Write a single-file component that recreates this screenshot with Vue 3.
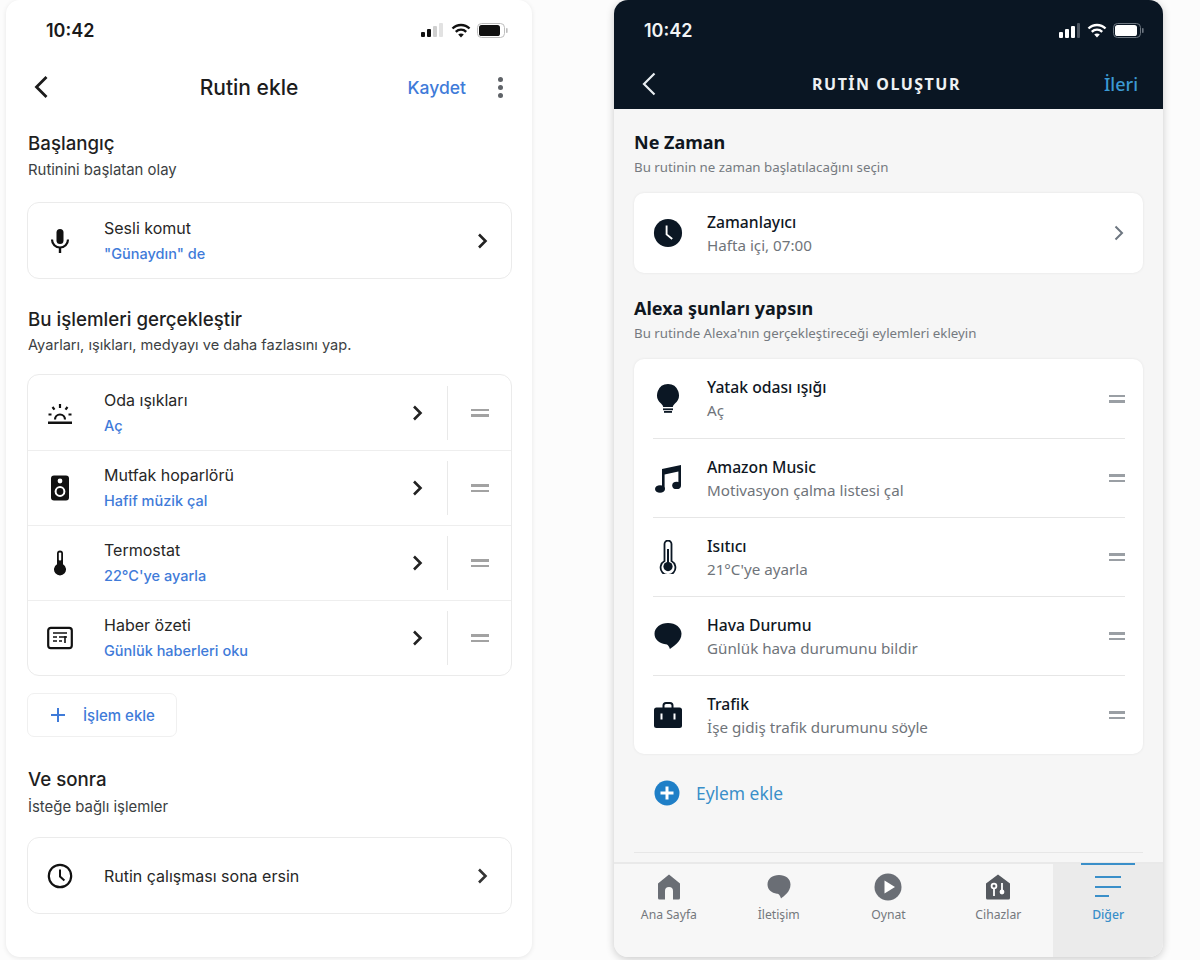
<template>
  <main class="page">
    <!-- Google Home style -->
    <section class="phone phone-light">
      <div class="status">
        <span class="time">10:42</span>
        <div class="status-icons">
          <svg width="24" height="14" viewBox="0 0 24 14">
            <rect x="0" y="9" width="4" height="5" rx="1" fill="#111" />
            <rect x="6" y="6" width="4" height="8" rx="1" fill="#111" />
            <rect x="12" y="3" width="4" height="11" rx="1" fill="#cfcfcf" />
            <rect x="18" y="0" width="4" height="14" rx="1" fill="#e2e2e2" />
          </svg>
          <svg width="20" height="15" viewBox="0 0 20 15" fill="none" stroke="#111" stroke-width="2.4">
            <path d="M1.5 5.5a12 12 0 0 1 17 0" />
            <path d="M4.8 8.8a7.4 7.4 0 0 1 10.4 0" />
            <path d="M10 14.6l-2.8-3a3.9 3.9 0 0 1 5.6 0z" fill="#111" stroke="none" />
          </svg>
          <svg width="31" height="15" viewBox="0 0 31 15">
            <rect x="0.5" y="0.5" width="27" height="14" rx="4" fill="none" stroke="#bdbdbd" />
            <rect x="2" y="2" width="21" height="11" rx="2.6" fill="#111" />
            <rect x="29" y="5" width="1.6" height="5" rx="0.8" fill="#bdbdbd" />
          </svg>
        </div>
      </div>

      <header class="nav">
        <svg class="back" width="16" height="24" viewBox="0 0 16 24" fill="none" stroke="#1b1b1b" stroke-width="2.8">
          <path d="M13.5 2L3.5 12l10 10" />
        </svg>
        <h1>Rutin ekle</h1>
        <span class="save">Kaydet</span>
        <div class="dots"><i></i><i></i><i></i></div>
      </header>

      <div class="section-head first">
        <h2>Başlangıç</h2>
        <p>Rutinini başlatan olay</p>
      </div>
      <div class="g-card">
        <div class="g-row">
          <span class="g-icon">
            <svg width="26" height="26" viewBox="0 0 26 26" fill="#111">
              <rect x="9.5" y="1" width="7" height="15" rx="3.5" />
              <path d="M5 11.5a8 8 0 0 0 16 0" fill="none" stroke="#111" stroke-width="2.2" />
              <rect x="11.8" y="19" width="2.4" height="6" />
            </svg>
          </span>
          <div class="g-text">
            <strong>Sesli komut</strong>
            <small>"Günaydın" de</small>
          </div>
          <svg class="g-chevron end" width="12" height="16" viewBox="0 0 12 16" fill="none" stroke="#222" stroke-width="2.6">
            <path d="M2 1.5L8.5 8 2 14.5" />
          </svg>
        </div>
      </div>

      <div class="section-head second">
        <h2>Bu işlemleri gerçekleştir</h2>
        <p>Ayarları, ışıkları, medyayı ve daha fazlasını yap.</p>
      </div>
      <div class="g-card">
        <div v-for="row in googleRows" :key="row.title" class="g-row">
          <span class="g-icon">
            <svg v-if="row.icon === 'sun'" width="26" height="22" viewBox="0 0 26 22" fill="none" stroke="#111" stroke-width="2.2">
              <path d="M8 17.5a5 5 0 0 1 10 0" />
              <path d="M1 20.8h24" stroke-width="2.6" />
              <path d="M13 2v4M5.5 5l2 2.6M20.5 5l-2 2.6M1.5 12.5h3M21.5 12.5h3" />
            </svg>
            <svg v-else-if="row.icon === 'speaker'" width="20" height="26" viewBox="0 0 20 26">
              <rect x="1" y="0.5" width="18" height="25" rx="3" fill="#111" />
              <circle cx="10" cy="6" r="2.4" fill="#fff" />
              <circle cx="10" cy="16.5" r="4.4" fill="none" stroke="#fff" stroke-width="2" />
            </svg>
            <svg v-else-if="row.icon === 'thermo'" width="14" height="26" viewBox="0 0 14 26" fill="#111">
              <path d="M4 3.5a3 3 0 0 1 6 0v10.8a6 6 0 1 1-6 0z" />
              <rect x="5.8" y="2.4" width="2.4" height="8" rx="1" fill="#fff" />
            </svg>
            <svg v-else width="26" height="24" viewBox="0 0 26 24" fill="none" stroke="#111">
              <rect x="1.2" y="1.8" width="23.6" height="20.4" rx="2.6" stroke-width="2.2" />
              <path d="M6 7h14M12 11h8M6 11h4M6 15h4M12 15h3M18 10v7" stroke-width="1.6" />
            </svg>
          </span>
          <div class="g-text">
            <strong>{{ row.title }}</strong>
            <small>{{ row.sub }}</small>
          </div>
          <svg class="g-chevron" width="12" height="16" viewBox="0 0 12 16" fill="none" stroke="#222" stroke-width="2.6">
            <path d="M2 1.5L8.5 8 2 14.5" />
          </svg>
          <span class="g-sep"></span>
          <span class="g-drag"><i></i><i></i></span>
        </div>
      </div>

      <button type="button" class="add-btn">
        <svg width="16" height="16" viewBox="0 0 16 16" stroke="#3f7bd9" stroke-width="2">
          <path d="M8 1v14M1 8h14" />
        </svg>
        <span>İşlem ekle</span>
      </button>

      <div class="section-head third">
        <h2>Ve sonra</h2>
        <p>İsteğe bağlı işlemler</p>
      </div>
      <div class="g-card">
        <div class="g-row">
          <span class="g-icon">
            <svg width="26" height="26" viewBox="0 0 26 26" fill="none" stroke="#111" stroke-width="2.2">
              <circle cx="13" cy="13" r="11.2" />
              <path d="M13 6.5V13.5l4.4 4" stroke-width="2" />
            </svg>
          </span>
          <div class="g-text"><strong>Rutin çalışması sona ersin</strong></div>
          <svg class="g-chevron end" width="12" height="16" viewBox="0 0 12 16" fill="none" stroke="#333" stroke-width="2.6">
            <path d="M2 1.5L8.5 8 2 14.5" />
          </svg>
        </div>
      </div>
    </section>

    <!-- Alexa style -->
    <section class="phone phone-alexa">
      <div class="alexa-top">
        <div class="status status-dark">
          <span class="time">10:42</span>
          <div class="status-icons">
            <svg width="22" height="15" viewBox="0 0 22 15">
              <rect x="0" y="9" width="4" height="6" rx="1" fill="#fff" />
              <rect x="6" y="6" width="4" height="9" rx="1" fill="#fff" />
              <rect x="12" y="3" width="4" height="12" rx="1" fill="#fff" />
              <rect x="18" y="0" width="3" height="15" rx="1" fill="#4c5560" />
            </svg>
            <svg width="20" height="15" viewBox="0 0 20 15" fill="none" stroke="#fff" stroke-width="2.4">
              <path d="M1.5 5.5a12 12 0 0 1 17 0" />
              <path d="M4.8 8.8a7.4 7.4 0 0 1 10.4 0" />
              <path d="M10 14.6l-2.8-3a3.9 3.9 0 0 1 5.6 0z" fill="#fff" stroke="none" />
            </svg>
            <svg width="31" height="15" viewBox="0 0 31 15">
              <rect x="0.5" y="0.5" width="27" height="14" rx="4" fill="none" stroke="#6d7680" />
              <rect x="2" y="2" width="22" height="11" rx="2.6" fill="#fff" />
              <rect x="29" y="5" width="1.6" height="5" rx="0.8" fill="#6d7680" />
            </svg>
          </div>
        </div>
        <header class="alexa-nav">
          <svg width="16" height="24" viewBox="0 0 16 24" fill="none" stroke="#e8edf1" stroke-width="2.2">
            <path d="M13.5 1.5L3 12l10.5 10.5" />
          </svg>
          <h1>RUTİN OLUŞTUR</h1>
          <span>İleri</span>
        </header>
      </div>

      <div class="alexa-body">
        <h2 class="a-head">Ne Zaman</h2>
        <p class="a-sub">Bu rutinin ne zaman başlatılacağını seçin</p>
        <div class="a-card">
          <div class="a-row timer">
            <span class="a-icon">
              <svg width="32" height="32" viewBox="0 0 32 32">
                <circle cx="16" cy="16" r="15" fill="#0b1724" />
                <path d="M14.5 8v9.5l6 5" fill="none" stroke="#fff" stroke-width="2" />
              </svg>
            </span>
            <div class="a-text">
              <strong>Zamanlayıcı</strong>
              <small>Hafta içi, 07:00</small>
            </div>
            <svg width="12" height="16" viewBox="0 0 12 16" fill="none" stroke="#6d7680" stroke-width="2">
              <path d="M2.5 1.5L9 8l-6.5 6.5" />
            </svg>
          </div>
        </div>

        <h2 class="a-head second">Alexa şunları yapsın</h2>
        <p class="a-sub">Bu rutinde Alexa'nın gerçekleştireceği eylemleri ekleyin</p>
        <div class="a-card">
          <div v-for="row in alexaRows" :key="row.title" class="a-row">
            <span class="a-icon">
              <svg v-if="row.icon === 'bulb'" width="24" height="32" viewBox="0 0 24 32" fill="#0b1724">
                <path d="M12 1a11 11 0 0 0-7 19.4c1.4 1.2 2 2.4 2.2 3.6h9.6c.2-1.2.8-2.4 2.2-3.6A11 11 0 0 0 12 1z" />
                <rect x="7" y="25.4" width="10" height="1.8" />
                <rect x="8" y="28" width="8" height="1.8" />
              </svg>
              <svg v-else-if="row.icon === 'music'" width="28" height="30" viewBox="0 0 28 30" fill="#0b1724">
                <path d="M8 6l19-4v20h-2.6V8.6L10.6 11.4V26H8z" />
                <ellipse cx="6" cy="26" rx="5" ry="3.8" />
                <ellipse cx="22.6" cy="22.4" rx="4.4" ry="3.6" />
              </svg>
              <svg v-else-if="row.icon === 'thermo'" width="18" height="34" viewBox="0 0 18 34" fill="none" stroke="#0b1724" stroke-width="1.8">
                <path d="M5.5 4a3.5 3.5 0 0 1 7 0v17a7.4 7.4 0 1 1-7 0z" />
                <circle cx="9" cy="26.6" r="4.6" fill="#0b1724" stroke="none" />
                <path d="M9 9v16" stroke-width="2" />
              </svg>
              <svg v-else-if="row.icon === 'bubble'" width="28" height="28" viewBox="0 0 28 28" fill="#0b1724">
                <path d="M14 1C6.5 1 .5 5.6.5 11.8c0 5.6 4.6 9.8 11 10.4 1.6.2 3.4 1 4.4 4.8 3-2.4 11.6-7 11.6-15.2C27.5 5.6 21.5 1 14 1z" />
              </svg>
              <svg v-else width="28" height="28" viewBox="0 0 28 28">
                <path d="M9.5 7V4.6A2.6 2.6 0 0 1 12 2h4a2.6 2.6 0 0 1 2.5 2.6V7" fill="none" stroke="#0b1724" stroke-width="2" />
                <rect x="0" y="6.5" width="28" height="20.5" rx="2.5" fill="#0b1724" />
                <path d="M7.5 12.5v6M20.5 12.5v6" stroke="#fff" stroke-width="2" />
              </svg>
            </span>
            <div class="a-text">
              <strong>{{ row.title }}</strong>
              <small>{{ row.sub }}</small>
            </div>
            <span class="a-drag"><i></i><i></i></span>
          </div>
        </div>

        <div class="a-add">
          <svg width="26" height="26" viewBox="0 0 26 26">
            <circle cx="13" cy="13" r="12.5" fill="#1f7fc7" />
            <path d="M13 6.5v13M6.5 13h13" stroke="#fff" stroke-width="3" />
          </svg>
          <span>Eylem ekle</span>
        </div>
        <div class="a-rule"></div>
      </div>

      <nav class="tabs">
        <div v-for="tab in tabs" :key="tab.label" class="tab" :class="{ active: tab.active }">
          <svg v-if="tab.icon === 'home'" width="24" height="26" viewBox="0 0 24 26" fill="#6a6e75">
            <path d="M12 .5L1 9.5V24a1.500 1.500 0 0 0 1.500 1.500H8V17a4 4 0 0 1 8 0v8.500h5.500A1.500 1.500 0 0 0 23 24V9.500z" />
          </svg>
          <svg v-else-if="tab.icon === 'chat'" width="24" height="26" viewBox="0 0 24 26" fill="#6a6e75">
            <path d="M12 1C5.500 1 .5 4.800.5 10.500c0 5 4 8.600 9.500 9.200 1.500.2 3 1 4 4.800 2.600-2.200 9.500-6.500 9.500-14C23.500 4.800 18.500 1 12 1z" />
          </svg>
          <svg v-else-if="tab.icon === 'play'" width="28" height="28" viewBox="0 0 28 28">
            <circle cx="14" cy="14" r="13.5" fill="#6a6e75" />
            <path d="M10.500 7.500L21 14l-10.500 6.500z" fill="#fff" />
          </svg>
          <svg v-else-if="tab.icon === 'devices'" width="26" height="26" viewBox="0 0 26 26">
            <path d="M13 .5L1 9.500V24a1.500 1.500 0 0 0 1.500 1.500h21A1.500 1.500 0 0 0 25 24V9.500z" fill="#55595f" />
            <circle cx="9" cy="12" r="2.4" fill="none" stroke="#fff" stroke-width="1.8" />
            <path d="M9 14.500V22" stroke="#fff" stroke-width="1.8" />
            <circle cx="17" cy="18" r="2.4" fill="#fff" />
            <path d="M17 9v7" stroke="#fff" stroke-width="1.8" />
          </svg>
          <svg v-else width="26" height="26" viewBox="0 0 26 26" stroke="#3a8fc9" stroke-width="2.2">
            <path d="M0 3h26M0 13h26M0 22h14" />
          </svg>
          <span>{{ tab.label }}</span>
        </div>
      </nav>
    </section>
  </main>
</template>

<script setup>
const googleRows = [
  { icon: 'sun', title: 'Oda ışıkları', sub: 'Aç' },
  { icon: 'speaker', title: 'Mutfak hoparlörü', sub: 'Hafif müzik çal' },
  { icon: 'thermo', title: 'Termostat', sub: "22°C'ye ayarla" },
  { icon: 'news', title: 'Haber özeti', sub: 'Günlük haberleri oku' }
]

const alexaRows = [
  { icon: 'bulb', title: 'Yatak odası ışığı', sub: 'Aç' },
  { icon: 'music', title: 'Amazon Music', sub: 'Motivasyon çalma listesi çal' },
  { icon: 'thermo', title: 'Isıtıcı', sub: "21°C'ye ayarla" },
  { icon: 'bubble', title: 'Hava Durumu', sub: 'Günlük hava durumunu bildir' },
  { icon: 'case', title: 'Trafik', sub: 'İşe gidiş trafik durumunu söyle' }
]

const tabs = [
  { icon: 'home', label: 'Ana Sayfa' },
  { icon: 'chat', label: 'İletişim' },
  { icon: 'play', label: 'Oynat' },
  { icon: 'devices', label: 'Cihazlar' },
  { icon: 'more', label: 'Diğer', active: true }
]
</script>

<style>
html,
body {
  margin: 0;
  background: #fcfcfc;
}
</style>

<style scoped>
.page {
  display: flex;
  gap: 82px;
  width: 1200px;
  height: 960px;
  padding-left: 6px;
  box-sizing: border-box;
  overflow: hidden;
  background: #fcfcfc;
}

.phone {
  height: 957px;
  box-sizing: border-box;
  overflow: hidden;
  display: flex;
  flex-direction: column;
}

h1,
h2,
p {
  margin: 0;
}

/* ── Left phone ── */
.phone-light {
  width: 526px;
  padding: 0 20px 0 21px;
  border-radius: 14px;
  background: #fff;
  box-shadow: 0 1px 5px rgba(0, 0, 0, 0.09);
  font-family: Inter, "Noto Sans", sans-serif;
  color: #1d1d1f;
}

.status {
  display: flex;
  align-items: center;
  justify-content: space-between;
  height: 60px;
  flex: none;
}

.phone-light .status {
  padding: 0 4px 0 19px;
}

.time {
  font: 600 18px Inter, sans-serif;
  color: #1a1a1a;
}

.status-icons {
  display: flex;
  align-items: center;
  gap: 6px;
}

.nav {
  display: flex;
  align-items: center;
  height: 54px;
  flex: none;
  position: relative;
  padding-left: 6px;
}

.nav h1 {
  position: absolute;
  left: 0;
  right: 41px;
  text-align: center;
  font-size: 21px;
  font-weight: 500;
  color: #1c1c1c;
}

.save {
  margin-left: auto;
  font-size: 17.5px;
  font-weight: 500;
  color: #3f7bd9;
}

.dots {
  display: grid;
  gap: 3px;
  margin: 0 9px 0 32px;
}

.dots i {
  width: 5px;
  height: 5px;
  border-radius: 50%;
  background: #5f6368;
}

.section-head {
  padding-left: 1px;
}

.section-head h2 {
  font-size: 18.7px;
  font-weight: 500;
  line-height: 24px;
  color: #1f1f1f;
}

.section-head p {
  margin-top: 4px;
  font-size: 14.9px;
  line-height: 20px;
  color: #3c3f43;
}

.section-head.first {
  margin-top: 18px;
  margin-bottom: 22px;
}

.section-head.second {
  margin-top: 29px;
  margin-bottom: 19px;
}

.section-head.second p {
  margin-top: 3px;
  font-size: 14.6px;
}

.section-head.third {
  margin-top: 31px;
  margin-bottom: 20px;
}

.section-head.third p {
  margin-top: 5px;
}

.g-card {
  flex: none;
  border: 1.5px solid #ebebeb;
  border-radius: 12px;
  overflow: hidden;
}

.g-row {
  display: flex;
  align-items: center;
  height: 75px;
  padding-left: 19px;
  box-sizing: border-box;
}

.g-row + .g-row {
  border-top: 1.5px solid #eeeeee;
}

.g-icon {
  display: flex;
  align-items: center;
  justify-content: center;
  width: 26px;
  margin-right: 31px;
  flex: none;
}

.g-text {
  flex: 1;
  display: grid;
  gap: 6px;
}

.g-text strong {
  font-size: 16px;
  font-weight: 400;
  line-height: 20px;
  color: #272727;
}

.g-text small {
  font-size: 14.5px;
  font-weight: 500;
  line-height: 20px;
  color: #3f7bd9;
}

.g-chevron {
  flex: none;
}

.g-chevron.end {
  margin-right: 22px;
}

.g-sep {
  width: 1px;
  height: 54px;
  margin: 0 23px;
  background: #e9e9e9;
}

.g-drag,
.a-drag {
  display: grid;
  gap: 3px;
  flex: none;
}

.g-drag {
  width: 18px;
  margin-right: 22px;
}

.g-drag i {
  height: 2.5px;
  background: #a2a2a2;
}

.add-btn {
  display: flex;
  align-items: center;
  gap: 17px;
  align-self: flex-start;
  width: 150px;
  height: 44px;
  margin-top: 17px;
  padding: 0 0 0 22px;
  border: 1.5px solid #f0f0f0;
  border-radius: 7px;
  background: #fff;
  font: 500 15px Inter, sans-serif;
  color: #3f7bd9;
}

/* ── Right phone ── */
.phone-alexa {
  width: 549px;
  border-radius: 14px;
  background: #f6f6f6;
  box-shadow: 0 2px 8px rgba(0, 0, 0, 0.2);
  font-family: "Noto Sans", "Open Sans", sans-serif;
}

.alexa-top {
  flex: none;
  height: 109px;
  background: #0a1623;
}

.status-dark {
  padding: 0 19px 0 30px;
}

.status-dark .time {
  color: #f2f4f5;
}

.alexa-nav {
  display: flex;
  align-items: center;
  justify-content: space-between;
  height: 49px;
  position: relative;
  padding: 0 25px 0 27px;
  margin-top: -1px;
}

.alexa-nav h1 {
  position: absolute;
  left: 0;
  right: 4px;
  text-align: center;
  font-size: 16px;
  font-weight: 700;
  letter-spacing: 1.5px;
  color: #eef1f3;
}

.alexa-nav span {
  font-size: 18px;
  font-weight: 500;
  color: #3c9ad3;
}

.alexa-body {
  flex: 1;
  min-height: 0;
  padding: 0 20px;
}

.a-head {
  margin-top: 20px;
  font-size: 18px;
  font-weight: 700;
  line-height: 26px;
  color: #10171f;
}

.a-head.second {
  margin-top: 22px;
}

.a-sub {
  margin-top: 3px;
  font-size: 13.3px;
  line-height: 18px;
  color: #757a80;
}

.a-card {
  margin-top: 17px;
  padding: 0 18px 0 0;
  border-radius: 10px;
  background: #fff;
  box-shadow: 0 0 3px rgba(0, 0, 0, 0.08);
}

.a-row {
  display: flex;
  align-items: center;
  height: 79px;
  margin-left: 19px;
  box-sizing: border-box;
}

.a-row + .a-row {
  border-top: 1px solid #e6e6e6;
}

.a-row.timer {
  height: 80px;
}

.a-icon {
  display: flex;
  align-items: center;
  justify-content: center;
  width: 30px;
  margin-right: 24px;
  flex: none;
}

.a-text {
  flex: 1;
  display: grid;
  gap: 3px;
}

.a-text strong {
  font-size: 15.7px;
  font-weight: 500;
  line-height: 20px;
  color: #10171f;
}

.a-text small {
  font-size: 15.2px;
  line-height: 20px;
  color: #6f747a;
}

.a-drag {
  width: 16px;
}

.a-drag i {
  height: 2.5px;
  background: #9a9fa4;
}

.a-add {
  display: flex;
  align-items: center;
  gap: 16px;
  margin: 26px 0 0 20px;
  font-size: 17.4px;
  color: #3a8fc9;
}

.a-rule {
  height: 1px;
  margin-top: 46px;
  background: #e7e7e7;
}

.tabs {
  flex: none;
  display: grid;
  grid-template-columns: repeat(5, 1fr);
  height: 95px;
  box-sizing: border-box;
  border-top: 2px solid #e9e9e9;
  background: #f7f7f7;
}

.tab {
  display: flex;
  flex-direction: column;
  align-items: center;
  height: 100%;
  padding-top: 9px;
  box-sizing: border-box;
  position: relative;
}

.tab svg {
  height: 28px;
}

.tab span {
  margin-top: 5px;
  font-size: 12.2px;
  color: #74787d;
}

.tab.active {
  background: #ebebeb;
}

.tab.active span {
  color: #3a8fc9;
  font-weight: 500;
}

.tab.active::before {
  content: '';
  position: absolute;
  top: -1px;
  left: 28px;
  width: 54px;
  height: 2px;
  background: #3a8fc9;
}
</style>
